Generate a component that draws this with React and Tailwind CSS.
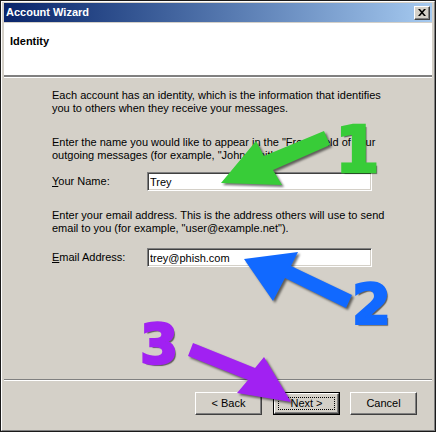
import { useState } from "react";

const ui = { fontFamily: '"Liberation Sans", Arial, sans-serif' };
const big = { fontFamily: '"DejaVu Sans", "Liberation Sans", sans-serif' };

function CloseIcon() {
  return (
    <svg width="8" height="7" viewBox="0 0 8 7">
      <path d="M0 0h2l2 2.2L6 0h2L5 3.5 8 7H6L4 4.8 2 7H0l3-3.5z" fill="#000" />
    </svg>
  );
}

function Field({ label, hotkey, value, onChange }) {
  return (
    <div className="flex items-center h-[19px]">
      <label className="w-[95px] text-[11px] text-black">
        <u>{hotkey}</u>
        {label}
      </label>
      <input
        value={value}
        onChange={(e) => onChange(e.target.value)}
        className="w-[225px] h-[19px] bg-white px-[2px] text-[11px] text-black outline-none border border-t-[#808080] border-l-[#808080] border-b-white border-r-white shadow-[inset_1px_1px_0_#404040,inset_-1px_-1px_0_#d4d0c8]"
        style={ui}
      />
    </div>
  );
}

function Button({ children, primary, className = "" }) {
  if (primary) {
    return (
      <button className={"w-[67px] h-[23px] border border-black bg-[#d4d0c8] p-0 " + className}>
        <div className="h-full w-full border border-t-white border-l-white border-b-[#404040] border-r-[#404040] shadow-[inset_-1px_-1px_0_#808080] p-[3px]">
          <div className="h-full w-full border border-dotted border-black flex items-center justify-center text-[11px] text-black">
            {children}
          </div>
        </div>
      </button>
    );
  }
  return (
    <button
      className={
        "w-[67px] h-[23px] bg-[#d4d0c8] flex items-center justify-center text-[11px] text-black border border-t-white border-l-white border-b-[#404040] border-r-[#404040] shadow-[inset_-1px_-1px_0_#808080] " +
        className
      }
    >
      {children}
    </button>
  );
}

export default function App() {
  const [name, setName] = useState("Trey");
  const [email, setEmail] = useState("trey@phish.com");

  return (
    <div
      className="relative w-[436px] h-[432px] bg-[#d4d0c8] border border-[#1a1a1a] overflow-hidden"
      style={ui}
    >
      <div className="flex flex-col h-full border border-t-white border-l-white border-b-[#808080] border-r-[#808080] pt-px px-[2px] pb-px">
        {/* title bar */}
        <div className="h-[19px] flex items-center justify-between pl-[2px] pr-[2px] bg-gradient-to-r from-[#0a246a] to-[#a6caf0]">
          <span className="text-[11px] font-bold text-white">Account Wizard</span>
          <div className="w-[16px] h-[14px] bg-[#d4d0c8] flex items-center justify-center border border-t-white border-l-white border-b-[#404040] border-r-[#404040] shadow-[inset_-1px_-1px_0_#808080]">
            <CloseIcon />
          </div>
        </div>

        {/* page header */}
        <div className="mt-px h-[54px] bg-white border-b-2 border-b-[#808080] shadow-[0_1px_0_#fff] pl-[6px] pt-[10px]">
          <h1 className="text-[11px] font-bold text-black">Identity</h1>
        </div>

        {/* body */}
        <div className="flex-1 pt-[12px] pl-[48px] text-[11px] leading-[13px] text-black">
          <p>
            Each account has an identity, which is the information that identifies
            <br />
            you to others when they receive your messages.
          </p>
          <p className="mt-[21px]">
            Enter the name you would like to appear in the "From" field of your
            <br />
            outgoing messages (for example, "John Smith").
          </p>
          <div className="mt-[10px]">
            <Field label="our Name:" hotkey="Y" value={name} onChange={setName} />
          </div>
          <p className="mt-[18px]">
            Enter your email address. This is the address others will use to send
            <br />
            email to you (for example, "user@example.net").
          </p>
          <div className="mt-[13px]">
            <Field label="mail Address:" hotkey="E" value={email} onChange={setEmail} />
          </div>
        </div>

        {/* footer */}
        <div className="border-t border-t-[#808080] shadow-[inset_0_1px_0_#fff] pt-[12px] pb-[14px] pr-[15px] flex justify-end">
          <Button>&lt; Back</Button>
          <Button primary className="ml-[11px]">Next &gt;</Button>
          <Button className="ml-[10px]">Cancel</Button>
        </div>
      </div>

      {/* annotation arrows */}
      <svg
        className="absolute left-0 top-0 pointer-events-none drop-shadow-[2px_2px_1px_rgba(0,0,0,0.55)]"
        width="436"
        height="432"
        viewBox="0 0 436 432"
      >
        <polygon
          points="220,182 255,140 263,155 323,130 329,144 272,169 281,184"
          fill="#38cc38"
        />
        <polygon
          points="243,258 297,251 290,265 351,294 345,307 284,277 272,300"
          fill="#1169ff"
        />
        <polygon
          points="290,401 236,392 247,379 187,355 192,342 254,367 263,356"
          fill="#a121f2"
        />
      </svg>

      <span
        className="absolute left-[334px] top-[117px] text-[64px] leading-none font-bold text-[#38cc38] [-webkit-text-stroke:2.5px_#38cc38] [text-shadow:2px_2px_1px_rgba(0,0,0,0.55)]"
        style={big}
      >
        1
      </span>
      <span
        className="absolute left-[351px] top-[275px] text-[56px] leading-none font-bold text-[#1169ff] [-webkit-text-stroke:2.5px_#1169ff] [text-shadow:2px_2px_1px_rgba(0,0,0,0.55)]"
        style={big}
      >
        2
      </span>
      <span
        className="absolute left-[139px] top-[316px] text-[55px] leading-none font-bold text-[#a121f2] [-webkit-text-stroke:2.5px_#a121f2] [text-shadow:2px_2px_1px_rgba(0,0,0,0.55)]"
        style={big}
      >
        3
      </span>
    </div>
  );
}
